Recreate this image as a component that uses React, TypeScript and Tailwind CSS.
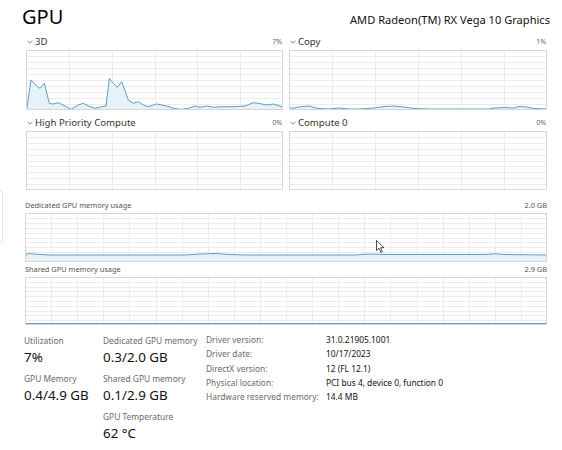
import React from 'react';

const LINE = '#5f9ec4';
const FILL = '#e6f1f8';
const GRID = '#ececec';
const BORDER = '#d6d6d6';

interface ChartProps {
  width: number;
  height: number;
  cols: number;
  rows: number;
  points?: [number, number][];
  fill?: boolean;
}

// grid + line, drawn in local pixel coords
const Chart: React.FC<ChartProps> = ({ width, height, cols, rows, points, fill = true }) => {
  const v: number[] = [];
  for (let i = 1; i < cols; i++) v.push(Math.round((width / cols) * i) + 0.5);
  const h: number[] = [];
  for (let i = 1; i < rows; i++) h.push(Math.round((height / rows) * i) + 0.5);
  const line = points ? points.map(([x, y]) => `${x},${y}`).join(' ') : '';
  const area = points
    ? `${points[0][0]},${height} ${line} ${points[points.length - 1][0]},${height}`
    : '';

  return (
    <svg width={width} height={height} className="block">
      {v.map((x) => (
        <line key={'v' + x} x1={x} y1={0} x2={x} y2={height} stroke={GRID} strokeWidth={1} />
      ))}
      {h.map((y) => (
        <line key={'h' + y} x1={0} y1={y} x2={width} y2={y} stroke={GRID} strokeWidth={1} />
      ))}
      {points && fill && <polygon points={area} fill={FILL} />}
      {points && <polyline points={line} fill="none" stroke={LINE} strokeWidth={1} />}
      <rect x={0.5} y={0.5} width={width - 1} height={height - 1} fill="none" stroke={BORDER} />
    </svg>
  );
};

const d3: [number, number][] = [
  [0.7, 59.5], [5, 30], [10.7, 36], [14, 38.3], [18.3, 33.3], [23.3, 53.3], [27.3, 54],
  [32.3, 52.7], [39, 56], [45, 59.3], [52.3, 55], [57.3, 53.3], [64, 56.7], [69, 58.3],
  [75.7, 56.7], [80, 56], [83.3, 28.3], [87.3, 33.3], [91.3, 37.3], [95.7, 31.7],
  [102.3, 50], [107.3, 53.3], [112.3, 51.7], [117.3, 55], [122.3, 56.7], [130.7, 54],
  [140.7, 56], [147.3, 58.3], [155.7, 59.3], [162.3, 58.3], [169, 56], [174, 57.3],
  [180.7, 56], [187.3, 57.3], [194, 56.7], [207.3, 56.7], [219, 56], [227.3, 52.7],
  [232.3, 53.3], [240.7, 55], [247.3, 54], [256, 56.7],
];

const copy: [number, number][] = [
  [0, 58], [5, 58], [10, 57], [15, 56.5], [20, 56], [25, 57.5], [30, 58.5], [40, 59],
  [50, 58], [60, 59], [70, 59], [85, 58], [95, 56.5], [105, 56], [115, 57], [125, 58.5],
  [140, 59], [200, 59], [205, 58], [215, 57.5], [225, 58], [230, 56.5], [238, 57],
  [245, 58.5], [258, 59],
];

const dedicated: [number, number][] = [
  [0, 44], [2, 40.5], [15, 41.5], [25, 42], [160, 42], [175, 41], [190, 40.5], [205, 41.5],
  [220, 42], [330, 42], [345, 41], [360, 41.5], [460, 41.5], [470, 40.8], [480, 41.5], [522, 42],
];

const shared: [number, number][] = [
  [0, 46.5], [522, 46.5],
];

const Chevron = () => (
  <svg width="6" height="4" viewBox="0 0 6 4" className="mr-[2px]">
    <path d="M0.5 0.7 L3 3.2 L5.5 0.7" fill="none" stroke="#777" strokeWidth="0.9" />
  </svg>
);

const EngineTitle: React.FC<{ name: string; pct: string }> = ({ name, pct }) => (
  <div className="flex items-center justify-between h-[14px] mb-[1px] pl-[1px]">
    <div className="flex items-center text-[9.6px] text-[#333] whitespace-nowrap">
      <Chevron />
      {name}
    </div>
    <span className="text-[7px] text-[#666] pr-[1px]">{pct}</span>
  </div>
);

const Stat: React.FC<{ label: string; value: string }> = ({ label, value }) => (
  <div className="flex flex-col whitespace-nowrap">
    <span className="text-[8.4px] leading-[13px] text-[#6b6b6b]">{label}</span>
    <span className="text-[13.4px] leading-[20px] text-[#111]">{value}</span>
  </div>
);

const info: [string, string][] = [
  ['Driver version:', '31.0.21905.1001'],
  ['Driver date:', '10/17/2023'],
  ['DirectX version:', '12 (FL 12.1)'],
  ['Physical location:', 'PCI bus 4, device 0, function 0'],
  ['Hardware reserved memory:', '14.4 MB'],
];

export default function App() {
  return (
    <div
      className="relative w-[562px] h-[450px] bg-white overflow-hidden"
      style={{ fontFamily: '"Noto Sans", "Open Sans", sans-serif' }}
    >
      {/* sidebar edge remnant */}
      <div className="absolute left-[-8px] top-[190px] w-[11px] h-[54px] rounded-[3px] border border-[#e3e3e3]" />

      {/* header */}
      <div className="flex items-end justify-between pl-[22px] pr-[12px] h-[34px]">
        <span className="text-[20px] leading-[28px] text-black mb-[3px]">GPU</span>
        <span className="text-[11.1px] leading-[16px] text-[#111] mb-[6px] whitespace-nowrap">
          AMD Radeon(TM) RX Vega 10 Graphics
        </span>
      </div>

      {/* engines */}
      <div className="grid grid-cols-[257px_258px] gap-x-[6px] gap-y-[6px] pl-[26px] pt-[1px]">
        <div>
          <EngineTitle name="3D" pct="7%" />
          <Chart width={257} height={60} cols={6} rows={10} points={d3} />
        </div>
        <div>
          <EngineTitle name="Copy" pct="1%" />
          <Chart width={258} height={60} cols={6} rows={10} points={copy} />
        </div>
        <div>
          <EngineTitle name="High Priority Compute" pct="0%" />
          <Chart width={257} height={59} cols={6} rows={10} />
        </div>
        <div>
          <EngineTitle name="Compute 0" pct="0%" />
          <Chart width={258} height={59} cols={6} rows={10} />
        </div>
      </div>

      {/* memory charts */}
      <div className="flex flex-col pl-[25px] pr-[15px] mt-[9px]">
        <div className="flex items-center justify-between h-[14px] text-[7.4px] text-[#555]">
          <span>Dedicated GPU memory usage</span>
          <span>2.0 GB</span>
        </div>
        <Chart width={522} height={49} cols={20} rows={10} points={dedicated} />
        <div className="flex items-center justify-between h-[14px] text-[7.4px] text-[#555] mt-[1px]">
          <span>Shared GPU memory usage</span>
          <span>2.9 GB</span>
        </div>
        <Chart width={522} height={48} cols={20} rows={10} points={shared} fill={false} />
      </div>

      {/* stats */}
      <div className="flex items-start pl-[24px] pt-[9px]">
        <div className="flex flex-col gap-[5px] w-[79px]">
          <Stat label="Utilization" value="7%" />
          <Stat label="GPU Memory" value="0.4/4.9 GB" />
        </div>
        <div className="flex flex-col gap-[5px] w-[103px]">
          <Stat label="Dedicated GPU memory" value="0.3/2.0 GB" />
          <Stat label="Shared GPU memory" value="0.1/2.9 GB" />
          <Stat label="GPU Temperature" value="62 °C" />
        </div>
        <div className="grid grid-cols-[120px_auto] content-start text-[8.4px] leading-[14.3px] -mt-[1px] whitespace-nowrap">
          {info.map(([k, v]) => (
            <React.Fragment key={k}>
              <span className="text-[#6b6b6b]">{k}</span>
              <span className="text-[#111]">{v}</span>
            </React.Fragment>
          ))}
        </div>
      </div>

      {/* mouse pointer */}
      <svg className="absolute left-[376px] top-[240px]" width="9" height="13" viewBox="0 0 9 13">
        <path d="M0.5 0.5 L0.5 10.5 L3 8.2 L4.8 12.3 L6.3 11.6 L4.6 7.7 L8 7.7 Z" fill="#fff" stroke="#222" strokeWidth="0.8" strokeLinejoin="round" />
      </svg>
    </div>
  );
}
